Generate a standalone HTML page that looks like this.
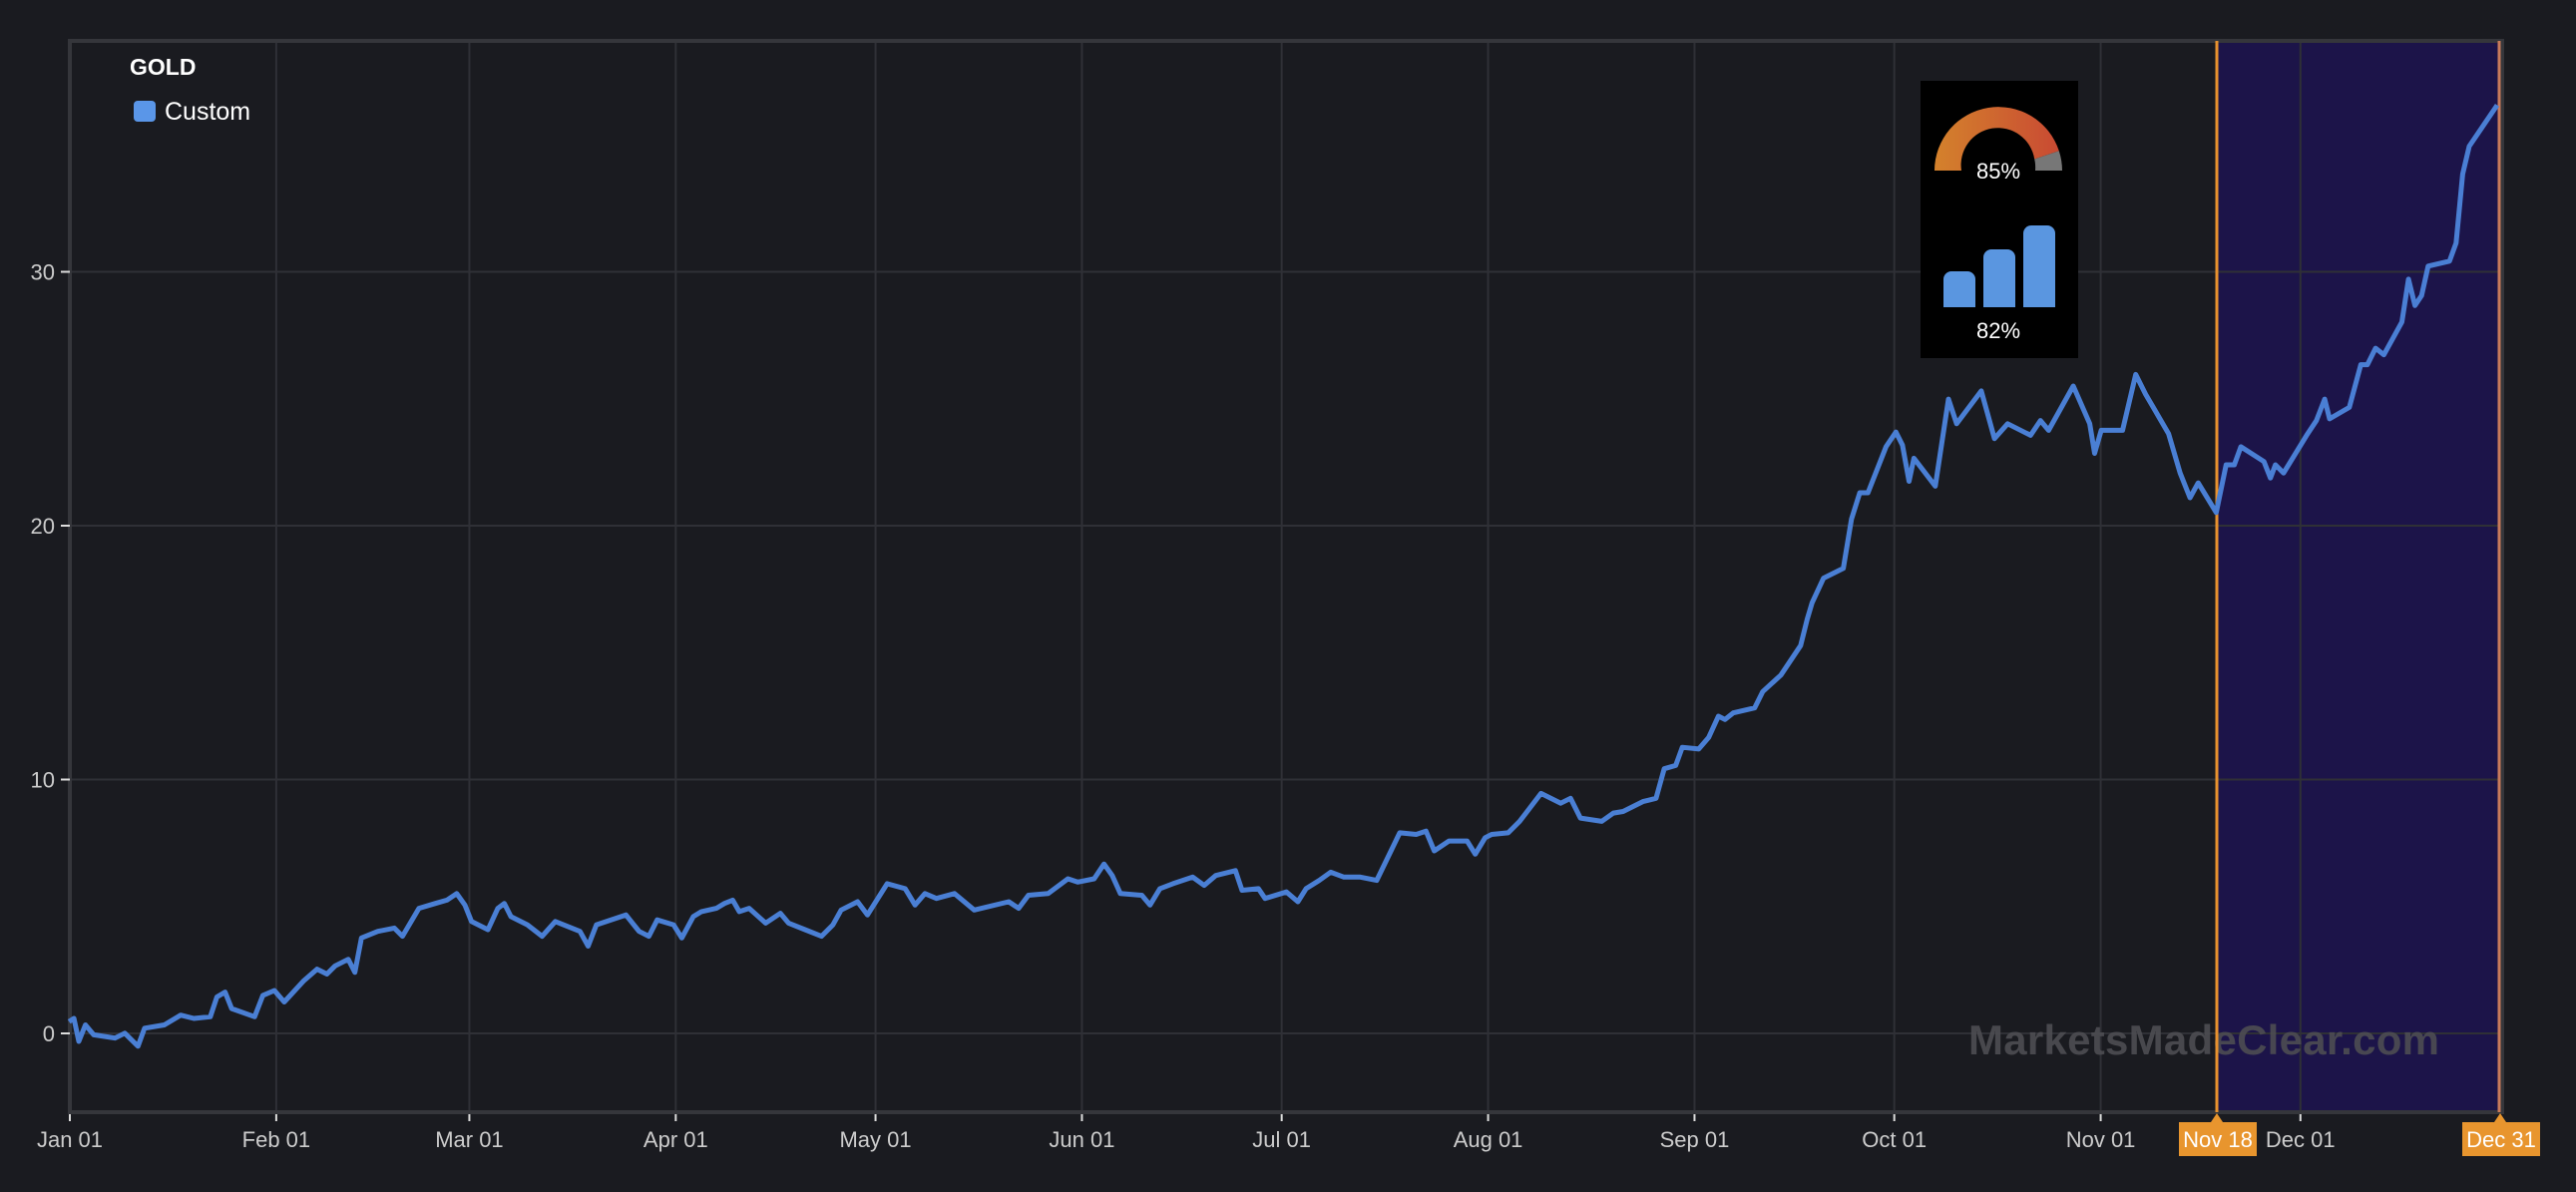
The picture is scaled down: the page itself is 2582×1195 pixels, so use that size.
<!DOCTYPE html>
<html><head><meta charset="utf-8"><style>
html,body{margin:0;padding:0;background:#1a1b20;width:2582px;height:1195px;overflow:hidden}
svg{display:block}
text{font-family:"Liberation Sans",sans-serif}
</style></head><body>
<svg id="s" width="2582" height="1195" viewBox="0 0 2582 1195">
<rect width="2582" height="1195" fill="#1a1b20"/>
<rect x="2222" y="41" width="284" height="1074" fill="#1c1449"/>
<g id="grid" stroke="#2f3036" stroke-width="2"></g>
<text x="1973" y="1057" font-size="42" font-weight="bold" fill="#4d4d52" opacity="0.9" textLength="472">MarketsMadeClear.com</text>
<path d="M70 1115 V41 H2508 V1115 Z" fill="none" stroke="#35363b" stroke-width="4"/>
<line x1="2222" y1="41" x2="2222" y2="1115" stroke="#e8922e" stroke-width="3"/>
<line x1="2505" y1="41" x2="2505" y2="1115" stroke="#c97a5a" stroke-width="3"/>
<polyline id="line" fill="none" stroke="#4a7fd4" stroke-width="5" stroke-linejoin="round"/>
<text x="130" y="75" font-size="23" font-weight="bold" fill="#fff">GOLD</text>
<rect x="134" y="101" width="22" height="21" rx="4" fill="#5a96e8"/>
<text x="165" y="120" font-size="25" fill="#fff">Custom</text>
<rect x="1925" y="81" width="158" height="278" fill="#000"/>
<defs><linearGradient id="g" x1="0" x2="1"><stop offset="0" stop-color="#d4822c"/><stop offset="1" stop-color="#c94a33"/></linearGradient></defs>
<path d="M1939 171 A64 64 0 0 1 2063.8 151.2 L2039.2 159.5 A37 37 0 0 0 1966 171 Z" fill="url(#g)"/>
<path d="M2063.8 151.2 A64 64 0 0 1 2067 171 L2040 171 A37 37 0 0 0 2039.2 159.5 Z" fill="#777"/>
<text x="2003" y="179" font-size="22" fill="#fff" text-anchor="middle">85%</text>
<path d="M1948 308 V280 a8 8 0 0 1 8 -8 h16 a8 8 0 0 1 8 8 V308Z" fill="#5a96e0"/>
<path d="M1988 308 V258 a8 8 0 0 1 8 -8 h16 a8 8 0 0 1 8 8 V308Z" fill="#5a96e0"/>
<path d="M2028 308 V234 a8 8 0 0 1 8 -8 h16 a8 8 0 0 1 8 8 V308Z" fill="#5a96e0"/>
<text x="2003" y="339" font-size="22" fill="#fff" text-anchor="middle">82%</text>
<g id="ax" font-size="22" fill="#ccc"></g>
<rect x="2184" y="1125" width="78" height="34" fill="#e8952e"/>
<path d="M2216 1125 L2222 1116 L2228 1125Z" fill="#e8952e"/>
<text x="2223" y="1150" font-size="22" fill="#fff" text-anchor="middle">Nov 18</text>
<rect x="2468" y="1125" width="78" height="34" fill="#e8952e"/>
<path d="M2500 1125 L2506 1116 L2512 1125Z" fill="#e8952e"/>
<text x="2507" y="1150" font-size="22" fill="#fff" text-anchor="middle">Dec 31</text>
</svg>
<script>
var NS="http://www.w3.org/2000/svg",grid=document.getElementById('grid'),ax=document.getElementById('ax');
function el(t,a,p,txt){var e=document.createElementNS(NS,t);for(var k in a)e.setAttribute(k,a[k]);if(txt)e.textContent=txt;p.appendChild(e);return e;}
var months=[["Jan 01",0],["Feb 01",31],["Mar 01",60],["Apr 01",91],["May 01",121],["Jun 01",152],["Jul 01",182],["Aug 01",213],["Sep 01",244],["Oct 01",274],["Nov 01",305],["Dec 01",335]];
months.forEach(function(m){var x=70+m[1]*6.674;if(m[1]>0)el('line',{x1:x,y1:41,x2:x,y2:1115},grid);
el('line',{x1:x,y1:1117,x2:x,y2:1124,stroke:'#ddd','stroke-width':2},ax);
el('text',{x:x,y:1150,'text-anchor':'middle'},ax,m[0]);});
[0,10,20,30].forEach(function(v){var y=1036-v*25.45;el('line',{x1:70,y1:y,x2:2506,y2:y},grid);
el('line',{x1:61,y1:y,x2:70,y2:y,stroke:'#ddd','stroke-width':2},ax);
el('text',{x:55,y:y+8,'text-anchor':'end'},ax,String(v));});
var d=[42,622,45,620,48,634,52,624,57,630,70,632,76,629,84,637,88,626,100,624,110,618,118,620,128,619,132,607,137,604,141,614,155,619,160,606,167,603,173,610,185,597,193,590,199,593,204,588,212,584,216,592,220,571,230,567,240,565,245,570,255,553,265,550,272,548,278,544,283,551,287,561,297,566,303,553,307,550,311,558,321,563,330,570,338,561,353,567,358,576,363,563,381,557,389,567,395,570,400,560,410,563,415,571,422,558,427,555,436,553,441,550,446,548,450,555,456,553,466,562,475,556,480,562,490,566,500,570,507,563,512,554,522,549,528,557,540,538,551,541,557,551,563,544,570,547,581,544,593,554,614,549,620,553,626,545,638,544,650,535,656,537,666,535,672,526,677,533,682,544,695,545,700,551,706,541,714,538,726,534,733,539,740,533,752,530,756,542,766,541,770,547,783,543,790,549,795,541,803,536,810,531,818,534,828,534,838,536,852,507,862,508,868,506,873,518,882,512,893,512,898,520,904,510,908,508,918,507,925,500,938,483,950,489,956,486,962,498,975,500,982,495,988,494,1000,488,1008,486,1013,468,1020,466,1024,455,1034,456,1040,449,1046,436,1050,438,1055,434,1068,431,1073,421,1084,411,1096,393,1100,377,1103,367,1110,352,1122,346,1127,316,1132,300,1137,300,1148,272,1154,263,1158,271,1162,293,1165,279,1178,296,1186,243,1191,258,1206,238,1214,267,1222,258,1236,265,1242,256,1247,262,1262,235,1272,258,1275,276,1279,262,1292,262,1300,228,1306,240,1320,264,1327,288,1333,303,1338,294,1349,312,1355,283,1360,283,1364,272,1378,281,1382,291,1385,283,1390,288,1404,265,1410,256,1415,243,1418,255,1430,248,1437,222,1441,222,1446,212,1451,216,1462,196,1466,170,1470,186,1474,180,1478,162,1491,159,1495,148,1499,106,1503,89,1520,64];
var s=1.6467,pts=[];for(var i=0;i<d.length;i+=2){var x=d[i]*s,y=d[i+1]*s;if(x>2505)x=2505;pts.push(x.toFixed(1)+','+y.toFixed(1));}
document.getElementById('line').setAttribute('points',pts.join(' '));
</script>
</body></html>
